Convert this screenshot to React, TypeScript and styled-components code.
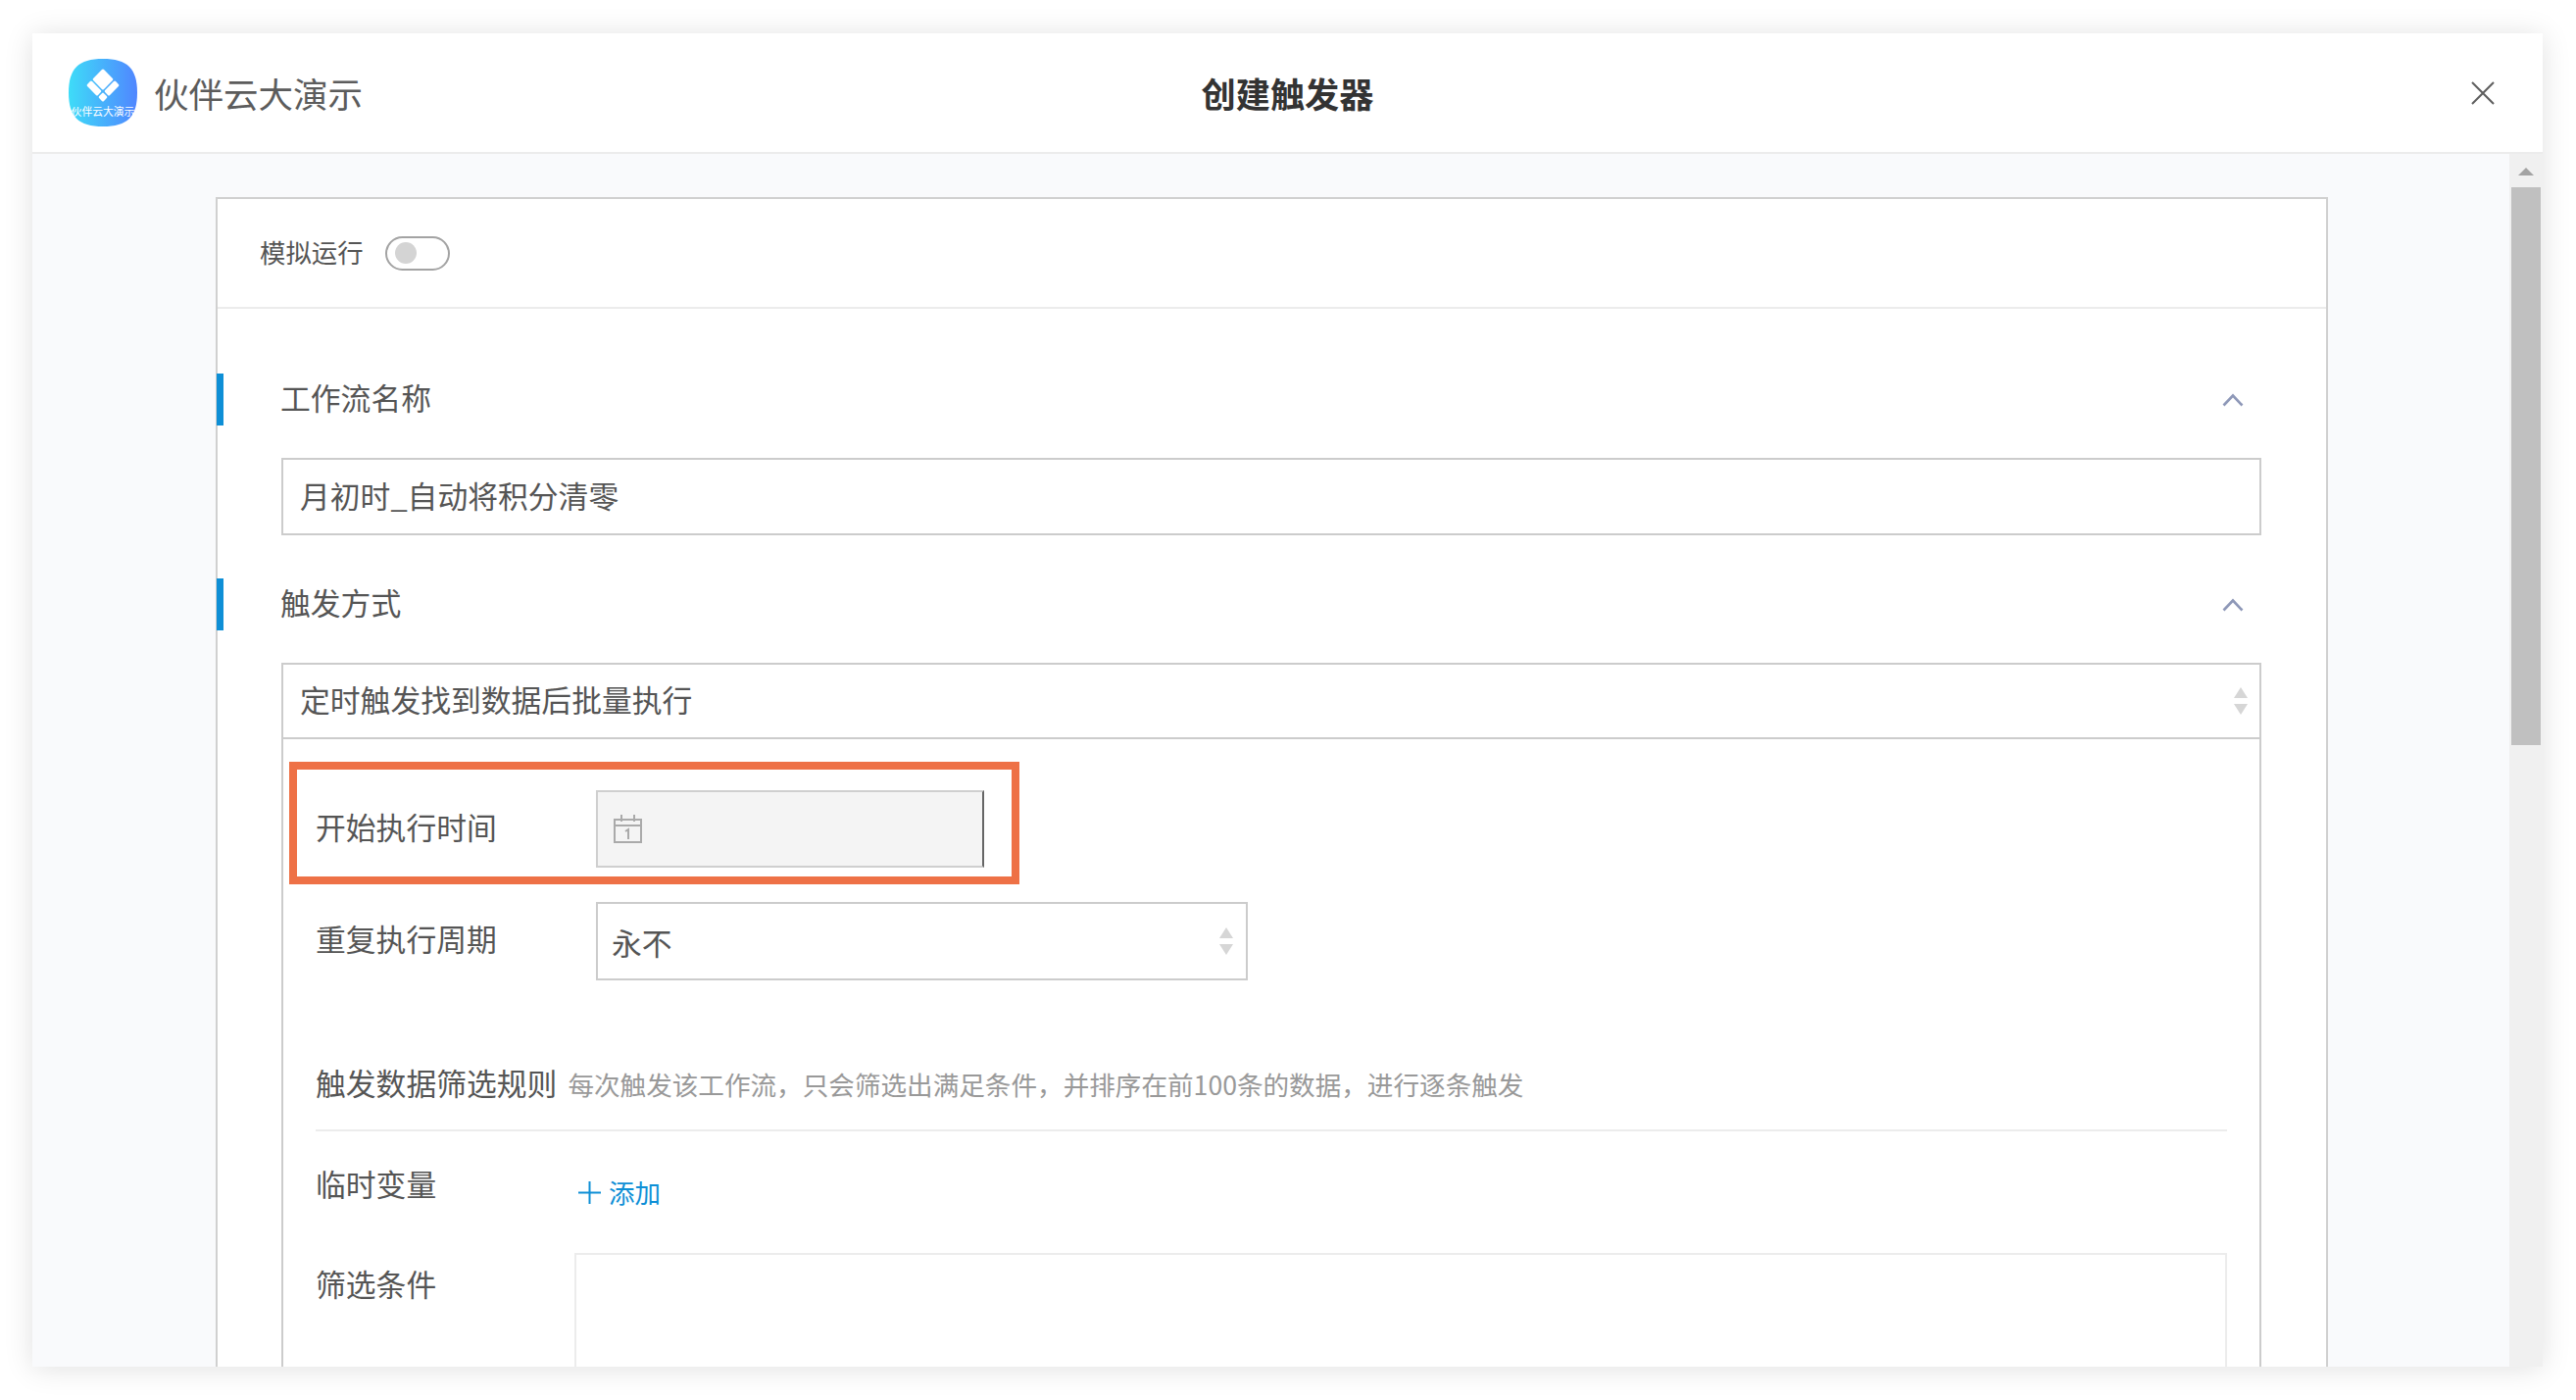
import React from "react";
import styled, { createGlobalStyle } from "styled-components";

const GlobalStyle = createGlobalStyle`
  html, body {
    margin: 0;
    padding: 0;
    background: #fff;
  }
  body {
    font-family: "Noto Sans CJK SC", "Noto Sans", sans-serif;
    color: #555;
  }
  * {
    box-sizing: border-box;
  }
`;

const Page = styled.div`
  width: 2628px;
  height: 1428px;
  padding: 34px 34px 34px 33px;
  overflow: hidden;
`;

const Dialog = styled.div`
  display: flex;
  flex-direction: column;
  height: 100%;
  overflow: hidden;
  background: #fff;
  box-shadow: 0 2px 28px rgba(0, 0, 0, 0.12);
`;

const Header = styled.header`
  display: grid;
  grid-template-columns: 1fr auto 1fr;
  align-items: center;
  flex: none;
  height: 123px;
  padding: 0 37px;
  border-bottom: 2px solid #ececec;
`;

const Brand = styled.div`
  display: flex;
  align-items: center;
  gap: 17px;
  font-size: 35.5px;
  line-height: 46px;
  color: #5c5c5c;
`;

const Title = styled.h1`
  margin: 0;
  font-size: 35.2px;
  line-height: 46px;
  font-weight: 700;
  color: #333;
`;

const CloseButton = styled.button`
  justify-self: end;
  display: flex;
  margin-right: 12px;
  padding: 0;
  border: 0;
  background: none;
`;

const Body = styled.div`
  display: flex;
  flex: 1;
  min-height: 0;
`;

const Main = styled.main`
  flex: 1;
  min-width: 0;
  overflow: hidden;
  padding: 44px 0 0 187px;
  background: #f9fafc;
`;

const Scrollbar = styled.div`
  display: flex;
  flex-direction: column;
  align-items: center;
  flex: none;
  width: 34px;
  background: #f0f0f0;
`;

const ScrollUp = styled.div`
  flex: none;
  width: 0;
  height: 0;
  margin: 14px 0 12px;
  border-left: 8px solid transparent;
  border-right: 8px solid transparent;
  border-bottom: 8px solid #a3a3a3;
`;

const ScrollThumb = styled.div`
  width: 30px;
  height: 569px;
  background: #c0c0c0;
`;

const Panel = styled.div`
  width: 2155px;
  min-height: 1400px;
  border: 2px solid #d0d0d0;
  background: #fff;
`;

const SimulateRow = styled.div`
  display: flex;
  align-items: center;
  gap: 22px;
  height: 112px;
  padding-left: 43px;
  border-bottom: 2px solid #ececec;
  font-size: 26.4px;
  line-height: 36px;
`;

const SimulateLabel = styled.span`
  padding-bottom: 2px;
`;

const Toggle = styled.span`
  display: flex;
  align-items: center;
  width: 66px;
  height: 35px;
  padding-left: 8px;
  border: 2px solid #a3a3a3;
  border-radius: 18px;
`;

const ToggleKnob = styled.span`
  width: 22px;
  height: 22px;
  border-radius: 50%;
  background: #d4d4d4;
`;

const SectionHead = styled.div<{ $top: number }>`
  display: flex;
  align-items: center;
  justify-content: space-between;
  height: 53px;
  margin: ${(props) => props.$top}px 0 33px -1px;
  padding: 0 84px 0 58px;
  border-left: 7px solid #0e8fd6;
  font-size: 30.8px;
  color: #555;
`;

const SectionName = styled.span`
  padding-bottom: 6px;
`;

const NameInput = styled.div`
  display: flex;
  align-items: center;
  height: 79px;
  margin: 0 66px 0 65px;
  padding: 0 0 5px 17px;
  border: 2px solid #cccccc;
  font-size: 30.8px;
`;

const TriggerSelect = styled.div`
  position: relative;
  display: flex;
  align-items: center;
  height: 78px;
  margin: 1px 66px 0 65px;
  padding: 0 0 5px 17px;
  border: 2px solid #cccccc;
  font-size: 30.8px;
`;

const TriggerBox = styled.div`
  margin: 0 66px 0 65px;
  padding: 52px 33px 0 33px;
  border-left: 2px solid #cccccc;
  border-right: 2px solid #cccccc;
`;

const SelectArrows = styled.svg<{ $right: number }>`
  position: absolute;
  top: 50%;
  right: ${(props) => props.$right}px;
  transform: translateY(-50%);
`;

const FieldRow = styled.div<{ $top: number }>`
  position: relative;
  display: flex;
  align-items: center;
  margin-top: ${(props) => props.$top}px;
`;

const FieldLabel = styled.div`
  flex: none;
  width: 286px;
  padding-bottom: 6px;
  font-size: 30.8px;
  line-height: 46px;
`;

const Highlight = styled.div`
  position: absolute;
  left: -27px;
  top: -29px;
  width: 745px;
  height: 125px;
  border: 8px solid #ee7146;
  pointer-events: none;
`;

const DateInput = styled.div`
  display: flex;
  align-items: center;
  width: 396px;
  height: 79px;
  padding-left: 16px;
  border: 2px solid #cfcfcf;
  border-right-color: #666;
  background: #f4f4f4;
`;

const RepeatSelect = styled.div`
  position: relative;
  display: flex;
  align-items: center;
  width: 665px;
  height: 80px;
  padding: 1px 0 0 14px;
  border: 2px solid #cccccc;
  font-size: 30.8px;
`;

const RuleHead = styled.div`
  display: flex;
  align-items: baseline;
  gap: 11px;
  margin-top: 81px;
  padding-bottom: 23px;
  border-bottom: 2px solid #ececec;
  font-size: 30.8px;
  line-height: 46px;
`;

const RuleHint = styled.span`
  font-size: 26.6px;
  color: #999;
`;

const VariableRow = styled.div`
  display: flex;
  height: 92px;
  margin-top: 32px;
`;

const RowLabel = styled.div<{ $top?: number }>`
  flex: none;
  width: 264px;
  margin-top: ${(props) => props.$top ?? 0}px;
  font-size: 30.8px;
  line-height: 46px;
`;

const AddLink = styled.a`
  display: flex;
  align-items: center;
  gap: 8px;
  align-self: flex-start;
  height: 46px;
  margin: 6px 0 0 4px;
  font-size: 26.5px;
  color: #0e8fd6;
`;

const AddIcon = styled.svg`
  margin-top: 3px;
`;

const FilterRow = styled.div`
  display: flex;
`;

const FilterBox = styled.div`
  flex: 1;
  height: 300px;
  border: 2px solid #ececec;
`;

function Logo() {
  return (
    <svg width="70" height="69" viewBox="0 0 70 69">
      <defs>
        <linearGradient id="logoFill" x1="0" y1="0" x2="1" y2="0">
          <stop offset="0" stopColor="#3edcf8" />
          <stop offset="1" stopColor="#5086ff" />
        </linearGradient>
      </defs>
      <path
        d="M35 0C60 0 70 10 70 34.5C70 59 60 69 35 69C10 69 0 59 0 34.5C0 10 10 0 35 0Z"
        fill="url(#logoFill)"
      />
      <g transform="translate(35 27) rotate(45)" fill="#fff">
        <rect x="-12" y="-12" width="15.5" height="15.5" rx="1.5" />
        <rect x="5" y="-12" width="7" height="15.5" rx="1.5" />
        <rect x="-12" y="5" width="15.5" height="7" rx="1.5" />
        <rect x="5" y="5" width="7" height="7" rx="1.5" />
      </g>
      <text x="35" y="58" fontSize="10.8" fill="#fff" textAnchor="middle">
        伙伴云大演示
      </text>
    </svg>
  );
}

function CloseIcon() {
  return (
    <svg width="24" height="24" viewBox="0 0 24 24">
      <path d="M1 1L23 23M23 1L1 23" stroke="#5f5f5f" strokeWidth="2" fill="none" />
    </svg>
  );
}

function Chevron() {
  return (
    <svg width="22" height="14" viewBox="0 0 22 14">
      <path d="M1.5 12.5L11 2.5L20.5 12.5" stroke="#8e98b8" strokeWidth="2.6" fill="none" />
    </svg>
  );
}

function Arrows({ right }: { right: number }) {
  return (
    <SelectArrows $right={right} width="14" height="28" viewBox="0 0 14 28">
      <path d="M7 0L14 11H0Z" fill="#d6d6d6" />
      <path d="M0 17H14L7 28Z" fill="#d6d6d6" />
    </SelectArrows>
  );
}

function CalendarIcon() {
  return (
    <svg width="29" height="29" viewBox="0 0 29 29" fill="none" stroke="#aaa" strokeWidth="2">
      <rect x="1" y="5" width="27" height="23" />
      <path d="M1 11H28M8 0V7M21 0V7" />
      <path d="M12 17L15 15V25" />
    </svg>
  );
}

function PlusIcon() {
  return (
    <AddIcon width="23" height="23" viewBox="0 0 23 23">
      <path d="M11.5 0V23M0 11.5H23" stroke="#0e8fd6" strokeWidth="2" />
    </AddIcon>
  );
}

export default function App() {
  return (
    <>
      <GlobalStyle />
      <Page>
        <Dialog>
          <Header>
            <Brand>
              <Logo />
              伙伴云大演示
            </Brand>
            <Title>创建触发器</Title>
            <CloseButton>
              <CloseIcon />
            </CloseButton>
          </Header>
          <Body>
            <Main>
              <Panel>
                <SimulateRow>
                  <SimulateLabel>模拟运行</SimulateLabel>
                  <Toggle>
                    <ToggleKnob />
                  </Toggle>
                </SimulateRow>

                <SectionHead $top={66}>
                  <SectionName>工作流名称</SectionName>
                  <Chevron />
                </SectionHead>
                <NameInput>月初时_自动将积分清零</NameInput>

                <SectionHead $top={44}>
                  <SectionName>触发方式</SectionName>
                  <Chevron />
                </SectionHead>
                <TriggerSelect>
                  定时触发找到数据后批量执行
                  <Arrows right={12} />
                </TriggerSelect>
                <TriggerBox>
                  <FieldRow $top={0}>
                    <FieldLabel>开始执行时间</FieldLabel>
                    <DateInput>
                      <CalendarIcon />
                    </DateInput>
                    <Highlight />
                  </FieldRow>
                  <FieldRow $top={35}>
                    <FieldLabel>重复执行周期</FieldLabel>
                    <RepeatSelect>
                      永不
                      <Arrows right={13} />
                    </RepeatSelect>
                  </FieldRow>

                  <RuleHead>
                    触发数据筛选规则
                    <RuleHint>
                      每次触发该工作流，只会筛选出满足条件，并排序在前100条的数据，进行逐条触发
                    </RuleHint>
                  </RuleHead>

                  <VariableRow>
                    <RowLabel $top={-2}>临时变量</RowLabel>
                    <AddLink>
                      <PlusIcon />
                      添加
                    </AddLink>
                  </VariableRow>
                  <FilterRow>
                    <RowLabel $top={8}>筛选条件</RowLabel>
                    <FilterBox />
                  </FilterRow>
                </TriggerBox>
              </Panel>
            </Main>
            <Scrollbar>
              <ScrollUp />
              <ScrollThumb />
            </Scrollbar>
          </Body>
        </Dialog>
      </Page>
    </>
  );
}
